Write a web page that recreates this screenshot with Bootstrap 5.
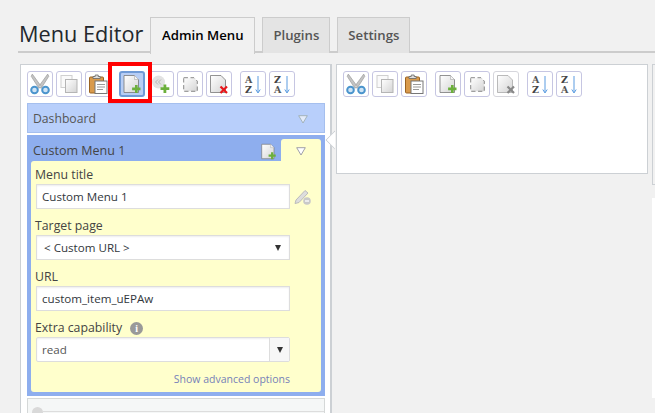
<!DOCTYPE html>
<html lang="en">
<head>
  <meta charset="UTF-8" />
  <meta name="viewport" content="width=device-width, initial-scale=1.0" />
  <title>Menu Editor</title>
  <link href="https://cdn.jsdelivr.net/npm/bootstrap@5.3.0/dist/css/bootstrap.min.css" rel="stylesheet" />
  <style>
    html, body { height: 413px; overflow: hidden; }
    body { background: #f1f1f1; font-family: "Open Sans", sans-serif; font-size: 13px; color: #444; }
    .page-wrap { padding: 17px 0 0 18px; width: 655px; }

    .head-row { border-bottom: 2px solid #ccc; height: 36px; }
    .page-title { font-size: 21.700px; line-height: 30px; margin: 0 7px 0 1px; padding-top: 2px; color: #23282d; font-weight: 400; }
    .head-tab { display: block; height: 36px; padding: 7px 0 0; font-size: 13.200px; line-height: 20px; font-weight: 600; color: #555; background: #e4e4e4; border: 1px solid #ccc; border-bottom: 0; text-decoration: none; margin-right: 7px; text-align: center; }
    .head-tab.on { background: #f1f1f1; color: #000; height: 37px; }
    .tab-one { width: 105px; }
    .tab-two { width: 68px; }
    .tab-three { width: 73px; }

    .columns { margin: 11px 0 0 2px; width: 660px; }
    .menu-box { width: 312px; height: 360px; background: #fff; border: 1px solid #ccd0d4; border-right-width: 2px; padding: 6px 6px 0; flex: none; }
    .sub-box { width: 312px; height: 110px; background: #fff; border: 1px solid #ccd0d4; padding: 6px 6px 0 6px; margin-left: 4px; flex: none; position: relative; }
    .side-col { margin-left: 4px; width: 20px; flex: none; }
    .side-a { height: 121px; background: #f1f1f1; border: 1px solid #ccd0d4; border-right: 0; }
    .side-b { height: 200px; margin-top: 13px; background: #fff; }

    .tool-row { height: 26px; margin-bottom: 6px; }
    .tool { width: 26px; height: 26px; padding: 0; background: #fff; border: 1px solid #c6c6e2; border-radius: 3px; margin-right: 3px; display: flex; align-items: center; justify-content: center; flex: none; }
    .tool svg { display: block; }
    .tool.dim { border-color: #d6d6dc; }
    .tool.gap-after { margin-right: 8px; }
    .tool.pressed { background: #b7cdf4; border: 2px solid #6f9ad6; margin-left: 5px; }
    .red-mark { position: absolute; left: 108px; top: 62px; width: 44px; height: 41px; border: 4px solid #f00; z-index: 5; pointer-events: none; }

    .menu-bar { height: 30px; background: #b8cffb; border: 1px solid #a5bfee; padding: 2px 0 0 5px; line-height: 26px; font-size: 12.200px; color: #555; width: 298px; }

    .open-item { width: 298px; height: 261px; margin-top: 2px; background: #8eaeee; padding: 4px; position: relative; }
    .open-top { height: 22px; padding-left: 2px; font-size: 12.500px; color: #444; line-height: 24px; }
    .open-tab { width: 40px; height: 23px; background: #ffffcc; border-radius: 3px 3px 0 0; margin-left: 4px; }
    .open-panel { height: 231px; background: #ffffcc; border-radius: 3px 0 3px 3px; padding: 5px 5px 0 4px; }

    .field-label { font-size: 12.300px; line-height: 18px; height: 18px; margin: 0; color: #444; display: flex; align-items: center; }
    .field-input { width: 254px; height: 25px; min-height: 25px; margin-left: 1px; border-radius: 0; border: 1px solid #ddd; box-shadow: inset 0 1px 2px rgba(0,0,0,.07); padding: 0 5px; font-size: 11.600px; line-height: 22px; color: #32373c; font-family: "Open Sans", sans-serif; background-color: #fff; }
    .field-line { margin-bottom: 8px; }
    .select-fake { padding-left: 7px; position: relative; }
    .drop-mark { width: 0; height: 0; border-left: 3.500px solid transparent; border-right: 3.500px solid transparent; border-top: 6px solid #333; position: absolute; }
    .combo { width: 254px; height: 25px; margin-left: 1px; border: 1px solid #ddd; border-radius: 2px; background: #fff; box-shadow: inset 0 1px 2px rgba(0,0,0,.07); }
    .combo-text { padding-left: 5px; line-height: 23px; font-size: 11.600px; color: #555; }
    .combo-btn { width: 20px; background: #f7f7f7; border-left: 1px solid #ddd; position: relative; }
    .info-dot { width: 13px; height: 13px; margin-left: 8px; border-radius: 50%; background: #999; color: #fff; font-size: 10px; line-height: 13px; text-align: center; font-weight: 700; font-family: "Liberation Serif", serif; }
    .adv-link { width: 255px; text-align: right; font-size: 10.500px; line-height: 16px; color: #7681b8; margin-top: 9px; text-decoration: none; display: block; }

    .next-item { width: 298px; height: 30px; margin-top: 2px; background: #f5f7f7; border: 1px solid #d5d8d8; position: relative; }
    .next-dot { position: absolute; left: 4px; top: 8px; width: 11px; height: 11px; border-radius: 50%; background: #d9d9d9; }
    .next-line { position: absolute; left: 14px; right: 0; top: 12px; border-top: 1px solid #ddd; }

    .notch { position: absolute; left: -9px; top: 68px; width: 14px; height: 14px; background: #fff; transform: rotate(45deg); border-left: 1px solid #ccd0d4; border-bottom: 1px solid #ccd0d4; clip-path: polygon(0 0, 0 100%, 100% 100%); }
  </style>
</head>
<body>
  <svg width="0" height="0" class="position-absolute">
    <defs>
      <linearGradient id="pg" x1="0" y1="0" x2="1" y2="1"><stop offset="0" stop-color="#fff"/><stop offset="1" stop-color="#d4d4d4"/></linearGradient>
      <symbol id="i-cut" viewBox="0 0 20 20">
        <path d="M3 1l8 11-2 2L2 3zM17 1L9 12l2 2 7-11z" fill="#c4c4c4" stroke="#9a9a9a" stroke-width=".6"/>
        <circle cx="5" cy="15.500" r="3" fill="#cfe4f5" stroke="#4a94cd" stroke-width="1.800"/>
        <circle cx="15" cy="15.500" r="3" fill="#cfe4f5" stroke="#4a94cd" stroke-width="1.800"/>
      </symbol>
      <symbol id="i-copy" viewBox="0 0 20 20">
        <rect x="2" y="1.500" width="11" height="12" fill="#fafafa" stroke="#d0d0d0"/>
        <rect x="6.500" y="5.500" width="11.500" height="13" fill="url(#pg)" stroke="#b5b5b5"/>
      </symbol>
      <symbol id="i-paste" viewBox="0 0 20 20">
        <rect x="1.500" y="3" width="14" height="16" rx="1" fill="#d99a4c" stroke="#9a6322"/>
        <rect x="7" y="7" width="12" height="12.500" fill="#fff" stroke="#777"/>
        <path d="M9 10.500h8M9 13h8M9 15.500h6" stroke="#999"/>
        <path d="M5 4.500V2.500h2.200V1h3v1.500h2v2z" fill="#ddd" stroke="#666" stroke-width=".8"/>
      </symbol>
      <symbol id="i-new" viewBox="0 0 20 20">
        <path d="M2 1.500h10.500l4 4v13h-14.500z" fill="url(#pg)" stroke="#777" stroke-width=".8"/>
        <path d="M12.500 1.500v4h4" fill="#f4f4f4" stroke="#aaa" stroke-width=".6"/>
        <path d="M13 11h2.600v2.600h2.900v2.600h-2.900v2.900h-2.600v-2.900h-2.900v-2.600h2.900z" fill="#6cb03c"/>
      </symbol>
      <symbol id="i-sep" viewBox="0 0 20 20">
        <circle cx="7.500" cy="8" r="6.500" fill="#e2e2e2"/>
        <path d="M7 5.500l-2.500 2.500 2.500 2.500M10 5.500l-2.500 2.500 2.500 2.500" fill="none" stroke="#aaa" stroke-width=".8"/>
        <path d="M12.500 10.500h2.800v2.800h3v2.800h-3v3h-2.800v-3h-3v-2.800h3z" fill="#6cb03c"/>
      </symbol>
      <symbol id="i-dash" viewBox="0 0 20 20">
        <path d="M2 2h12l4 4v12h-16z" fill="url(#pg)"/>
        <path d="M2 2h12l4 4v12h-16z" fill="none" stroke="#666" stroke-width=".9" stroke-dasharray="5 3"/>
      </symbol>
      <symbol id="i-del" viewBox="0 0 20 20">
        <path d="M1.500 1.500h10.500l4.500 4.500v12.500h-15z" fill="url(#pg)" stroke="#777" stroke-width=".8"/>
        <path d="M11.500 12.500l6.500 6.500M18 12.500l-6.500 6.500" stroke="#e8161b" stroke-width="2.200"/>
      </symbol>
      <symbol id="i-del-off" viewBox="0 0 20 20">
        <path d="M1.500 1.500h10.500l4.500 4.500v12.500h-15z" fill="url(#pg)" stroke="#aaa" stroke-width=".8"/>
        <path d="M11.500 12.500l6.500 6.500M18 12.500l-6.500 6.500" stroke="#888" stroke-width="2.200"/>
      </symbol>
      <symbol id="i-down" viewBox="0 0 6 18">
        <path d="M3 0v16M.8 13.500L3 17l2.200-3.500" fill="none" stroke="#5a9be0" stroke-width="1"/>
      </symbol>
    </defs>
  </svg>

  <div class="red-mark"></div>

  <div class="page-wrap">
    <div class="head-row d-flex align-items-start">
      <h1 class="page-title">Menu Editor</h1>
      <a class="head-tab on tab-one" href="#">Admin Menu</a>
      <a class="head-tab tab-two" href="#">Plugins</a>
      <a class="head-tab tab-three" href="#">Settings</a>
    </div>

    <div class="columns d-flex align-items-start">
      <div class="menu-box">
        <div class="tool-row d-flex">
          <button class="tool" type="button"><svg width="22" height="22"><use href="#i-cut"/></svg></button>
          <button class="tool" type="button"><svg width="20" height="20"><use href="#i-copy"/></svg></button>
          <button class="tool" type="button"><svg width="20" height="20"><use href="#i-paste"/></svg></button>
          <button class="tool pressed" type="button"><svg width="20" height="20"><use href="#i-new"/></svg></button>
          <button class="tool" type="button"><svg width="20" height="20"><use href="#i-sep"/></svg></button>
          <button class="tool" type="button"><svg width="17" height="17"><use href="#i-dash"/></svg></button>
          <button class="tool gap-after" type="button"><svg width="20" height="20"><use href="#i-del"/></svg></button>
          <button class="tool" type="button"><svg width="22" height="22" viewBox="0 0 22 22"><text x="3" y="10" font-family="DejaVu Serif" font-weight="700" font-size="9.500" fill="#555">A</text><text x="3" y="20" font-family="DejaVu Serif" font-weight="700" font-size="9.500" fill="#444">Z</text><use href="#i-down" x="13" y="3" width="6" height="18"/></svg></button>
          <button class="tool" type="button"><svg width="22" height="22" viewBox="0 0 22 22"><text x="3" y="10" font-family="DejaVu Serif" font-weight="700" font-size="9.500" fill="#444">Z</text><text x="3" y="20" font-family="DejaVu Serif" font-weight="700" font-size="9.500" fill="#555">A</text><use href="#i-down" x="13" y="3" width="6" height="18"/></svg></button>
        </div>

        <div class="menu-bar d-flex align-items-center justify-content-between">
          <span>Dashboard</span>
          <svg class="me-3" width="10" height="9"><path d="M.7.700h8.600L5 8z" fill="#e3ebfb" stroke="#9aa" stroke-width=".8"/></svg>
        </div>

        <div class="open-item">
          <div class="open-top d-flex justify-content-between align-items-start">
            <span class="flex-grow-1">Custom Menu 1</span>
            <svg class="mt-1" width="17" height="17" viewBox="0 0 20 20"><use href="#i-new"/></svg>
            <div class="open-tab d-flex justify-content-center pt-1">
              <svg class="mt-1" width="10" height="9"><path d="M.7.700h8.600L5 8z" fill="#fff" stroke="#889" stroke-width=".8"/></svg>
            </div>
          </div>
          <div class="open-panel">
            <div class="field-line">
              <label class="field-label">Menu title</label>
              <div class="d-flex align-items-center">
                <input class="form-control field-input" type="text" value="Custom Menu 1" />
                <svg class="ms-1" width="18" height="18" viewBox="0 0 18 18"><path d="M2 12L11 2.500l3 2.500-9 9.500-4 1z" fill="#ddd" stroke="#bbb"/><circle cx="13" cy="13" r="3.800" fill="#c9c9c9"/><path d="M11 13h4" stroke="#fff" stroke-width="1.300"/></svg>
              </div>
            </div>
            <div class="field-line">
              <label class="field-label">Target page</label>
              <div class="field-input select-fake d-flex align-items-center">&lt; Custom URL &gt;<span class="drop-mark top-50 translate-middle-y end-0 me-2"></span></div>
            </div>
            <div class="field-line">
              <label class="field-label">URL</label>
              <input class="form-control field-input" type="text" value="custom_item_uEPAw" />
            </div>
            <div class="field-line mb-0">
              <label class="field-label">Extra capability <span class="info-dot">i</span></label>
              <div class="combo d-flex">
                <div class="combo-text flex-grow-1">read</div>
                <div class="combo-btn"><span class="drop-mark top-50 start-50 translate-middle"></span></div>
              </div>
            </div>
            <a class="adv-link" href="#">Show advanced options</a>
          </div>
        </div>

        <div class="next-item"><span class="next-dot"></span><span class="next-line"></span></div>
      </div>

      <div class="sub-box">
        <div class="notch"></div>
        <div class="tool-row d-flex">
          <button class="tool" type="button"><svg width="22" height="22"><use href="#i-cut"/></svg></button>
          <button class="tool" type="button"><svg width="20" height="20"><use href="#i-copy"/></svg></button>
          <button class="tool gap-after" type="button"><svg width="20" height="20"><use href="#i-paste"/></svg></button>
          <button class="tool" type="button"><svg width="20" height="20"><use href="#i-new"/></svg></button>
          <button class="tool" type="button"><svg width="17" height="17"><use href="#i-dash"/></svg></button>
          <button class="tool dim gap-after" type="button"><svg width="20" height="20"><use href="#i-del-off"/></svg></button>
          <button class="tool" type="button"><svg width="22" height="22" viewBox="0 0 22 22"><text x="3" y="10" font-family="DejaVu Serif" font-weight="700" font-size="9.500" fill="#555">A</text><text x="3" y="20" font-family="DejaVu Serif" font-weight="700" font-size="9.500" fill="#444">Z</text><use href="#i-down" x="13" y="3" width="6" height="18"/></svg></button>
          <button class="tool" type="button"><svg width="22" height="22" viewBox="0 0 22 22"><text x="3" y="10" font-family="DejaVu Serif" font-weight="700" font-size="9.500" fill="#444">Z</text><text x="3" y="20" font-family="DejaVu Serif" font-weight="700" font-size="9.500" fill="#555">A</text><use href="#i-down" x="13" y="3" width="6" height="18"/></svg></button>
        </div>
      </div>

      <div class="side-col">
        <div class="side-a"></div>
        <div class="side-b"></div>
      </div>
    </div>
  </div>

  <script src="https://cdn.jsdelivr.net/npm/bootstrap@5.3.0/dist/js/bootstrap.bundle.min.js"></script>
</body>
</html>
